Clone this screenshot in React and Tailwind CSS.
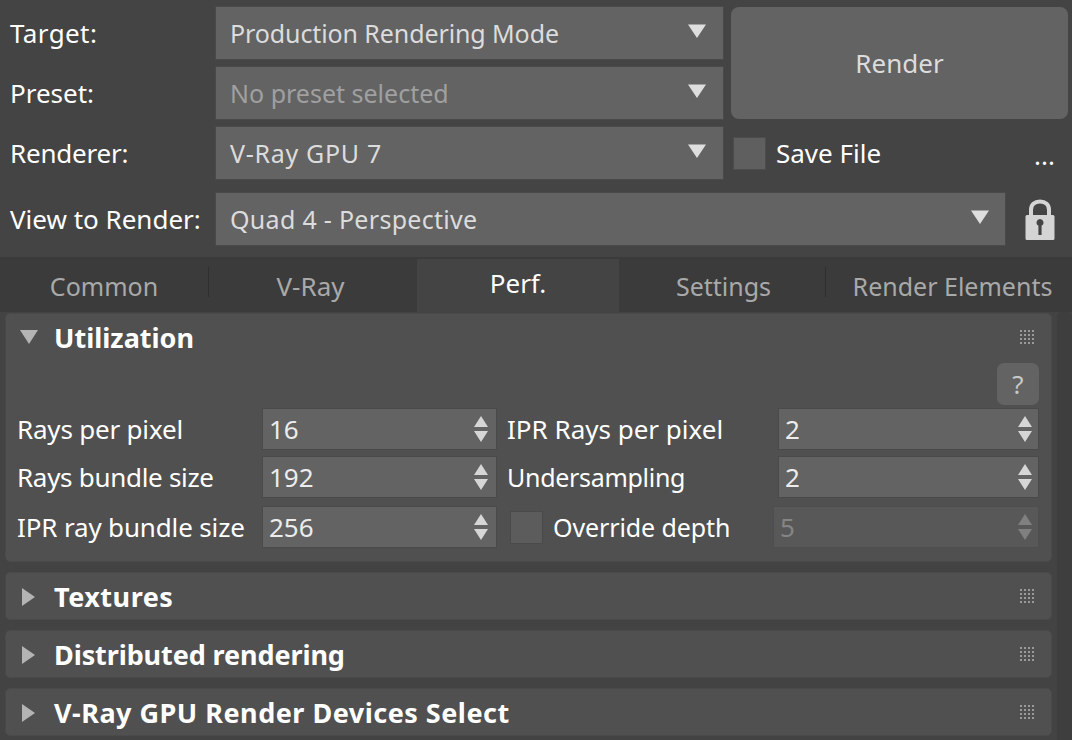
import React from "react";

const FONT = "font-['Noto_Sans','Open_Sans',sans-serif]";

function Caret({ className = "" }) {
  return (
    <svg width="18" height="14" viewBox="0 0 18 14" className={className}>
      <path d="M0 0.5H18L9 14Z" fill="#dedede" />
    </svg>
  );
}

function Dropdown({ text, disabled, textClass = "" }) {
  return (
    <div className="flex h-[52px] items-center justify-between bg-[#636363] pl-[14px] pr-[17px] shadow-[0_0_0_1px_#4a4a4a]">
      <span className={`text-[25px] ${disabled ? "text-[#a0a0a0]" : "text-[#dcdcdc]"} ${textClass}`}>{text}</span>
      <Caret className="mb-[5px]" />
    </div>
  );
}

function Spinner({ value, disabled, className = "" }) {
  const fill = disabled ? "#808080" : "#d6d6d6";
  return (
    <div
      className={`flex h-[42px] items-center justify-between border pl-[6px] ${
        disabled ? "border-[#4e4e4e] bg-[#585858] text-[#858585]" : "border-[#4a4a4a] bg-[#636363] text-[#ececec]"
      } ${className}`}
    >
      <span>{value}</span>
      <svg width="14" height="26" viewBox="0 0 14 26">
        <path d="M7 0L14 11H0Z" fill={fill} />
        <path d="M0 15H14L7 26Z" fill={fill} />
      </svg>
    </div>
  );
}

function Grip() {
  const dots = [0, 4, 8, 12];
  return (
    <svg width="14" height="14" viewBox="0 0 14 14" className="mb-px shrink-0">
      {dots.map((y) =>
        dots.map((x) => <rect key={`${x}-${y}`} x={x} y={y} width="2" height="2" fill="#9a9a9a" />)
      )}
    </svg>
  );
}

function PanelHeader({ title, open, titleClass = "" }) {
  return (
    <div className="flex h-[46px] items-center pl-[16px] pr-[17px] pt-px">
      <div className="flex w-[32px] shrink-0">
        {open ? (
          <svg width="18" height="14" viewBox="0 0 18 14" className="-ml-[2px] mb-[2px]">
            <path d="M0 0H18L9 14Z" fill="#b4b4b4" />
          </svg>
        ) : (
          <svg width="13" height="18" viewBox="0 0 13 18">
            <path d="M0 0L13 9L0 18Z" fill="#b4b4b4" />
          </svg>
        )}
      </div>
      <span className={`flex-1 text-[27px] font-bold text-white ${titleClass}`}>{title}</span>
      <Grip />
    </div>
  );
}

function Panel({ title, titleClass }) {
  return (
    <div className="rounded-[5px] border border-[#4a4a4a] bg-[#505050]">
      <PanelHeader title={title} titleClass={titleClass} />
    </div>
  );
}

const tabs = [
  { label: "Common", width: "w-[207px]", cls: "pr-[3px] text-[25px]", sep: true },
  { label: "V-Ray", width: "w-[208px]", cls: "pr-[5px]" },
  { label: "Perf.", width: "w-[202px]", active: true },
  { label: "Settings", width: "w-[207px]", cls: "pl-[2px] text-[25px]", sep: true },
  { label: "Render Elements", width: "w-[246px]", cls: "pl-[7px] text-[25px]" },
];

export default function App() {
  return (
    <div className={`flex h-[740px] w-[1072px] flex-col overflow-hidden bg-[#444444] text-[26px] leading-[36px] text-white ${FONT}`}>
      <div className="h-[257px] shrink-0 pl-[10px] pr-[4px] pt-[7px]">
        <div className="grid grid-cols-[198px_507px_1fr] gap-x-[8px] gap-y-[8px]">
          <div className="flex h-[52px] items-center pb-px tracking-[0.4px]">Target:</div>
          <Dropdown text="Production Rendering Mode" textClass="tracking-[-0.1px]" />
          <div className="row-span-2 flex items-center justify-center rounded-[8px] bg-[#636363] text-[#dcdcdc]">
            Render
          </div>
          <div className="flex h-[52px] items-center">Preset:</div>
          <Dropdown text="No preset selected" disabled />
          <div className="flex h-[52px] items-center tracking-[-0.2px]">Renderer:</div>
          <Dropdown text="V-Ray GPU 7" textClass="tracking-[0.7px]" />
          <div className="flex h-[52px] items-center">
            <div className="ml-[2px] h-[33px] w-[33px] border border-[#4c4c4c] bg-[#5f5f5f]" />
            <span className="ml-[10px] flex-1">Save File</span>
            <span className="mr-[13px] mt-[4px] leading-none">...</span>
          </div>
        </div>
        <div className="mt-[14px] flex items-center">
          <div className="w-[206px] shrink-0">View to Render:</div>
          <div className="flex h-[52px] w-[789px] items-center justify-between bg-[#636363] pl-[14px] pr-[16px] text-[#dcdcdc] shadow-[0_0_0_1px_#4a4a4a]">
            <span className="text-[25px] tracking-[0.3px]">Quad 4 - Perspective</span>
            <Caret className="mb-[5px]" />
          </div>
          <svg width="30" height="41" viewBox="0 0 30 41" className="ml-[20px]">
            <path d="M6 18V11C6 5.5 9.5 2.5 15 2.5S24 5.5 24 11V18" fill="none" stroke="#d4d4d4" strokeWidth="4" />
            <path
              fillRule="evenodd"
              d="M2 16H28A1.5 1.5 0 0 1 29.5 17.5V39.5A1.5 1.5 0 0 1 28 41H2A1.5 1.5 0 0 1 .5 39.5V17.5A1.5 1.5 0 0 1 2 16ZM15 20A3.5 3.5 0 0 0 13.4 26.6V36H16.6V26.6A3.5 3.5 0 0 0 15 20Z"
              fill="#d4d4d4"
            />
          </svg>
        </div>
      </div>

      <div className="flex h-[55px] shrink-0 items-end bg-[#3b3b3b] pl-[2px] text-[#a9a9a9]">
        {tabs.map((t) =>
          t.active ? (
            <div key={t.label} className={`flex h-[53px] ${t.width} items-center justify-center bg-[#444444] pb-[6px] text-white`}>
              {t.label}
            </div>
          ) : (
            <div key={t.label} className={`relative flex h-[53px] ${t.width} items-center justify-center pt-px ${t.cls}`}>
              {t.label}
              {t.sep && <div className="absolute right-0 top-[8px] h-[30px] w-px bg-[#2f2f2f]" />}
            </div>
          )
        )}
      </div>

      <div className="flex flex-1 bg-[#434343]">
        <div className="flex w-[1052px] shrink-0 flex-col gap-[10px] pl-[5px] pt-px">
          <div className="h-[249px] rounded-[5px] border border-[#4a4a4a] bg-[#505050]">
            <PanelHeader title="Utilization" open />
            <div className="flex justify-end pr-[12px] pt-[3px]">
              <div className="flex h-[42px] w-[42px] items-center justify-center rounded-[7px] bg-[#636363] text-[#c8c8c8]">?</div>
            </div>
            <div className="mt-[3px] grid grid-cols-[245px_235px_10px_271px_1fr] items-center gap-y-[6px] pl-[11px] pr-[12px]">
              <div className="tracking-[-0.2px]">Rays per pixel</div>
              <Spinner value="16" className="pr-[8px]" />
              <div />
              <div>IPR Rays per pixel</div>
              <Spinner value="2" className="pr-[6px]" />
              <div className="tracking-[-0.3px]">Rays bundle size</div>
              <Spinner value="192" className="pr-[8px]" />
              <div />
              <div className="text-[25px] tracking-[-0.3px]">Undersampling</div>
              <Spinner value="2" className="pr-[6px]" />
              <div className="mt-[2px] tracking-[-0.15px]">IPR ray bundle size</div>
              <Spinner value="256" className="mt-[2px] pr-[8px]" />
              <div />
              <div className="mt-[2px] flex items-center">
                <div className="ml-[3px] h-[33px] w-[33px] border border-[#4a4a4a] bg-[#5c5c5c]" />
                <span className="ml-[10px] text-[25px] tracking-[-0.1px]">Override depth</span>
              </div>
              <Spinner value="5" disabled className="-ml-[5px] mt-[2px] pr-[6px]" />
            </div>
          </div>
          <Panel title="Textures" titleClass="tracking-[0.5px]" />
          <Panel title="Distributed rendering" titleClass="tracking-[-0.1px]" />
          <Panel title="V-Ray GPU Render Devices Select" titleClass="tracking-[0.5px]" />
        </div>
        <div className="ml-[5px] flex-1 rounded-t-[5px] bg-[#3e3e3e]" />
      </div>
    </div>
  );
}
